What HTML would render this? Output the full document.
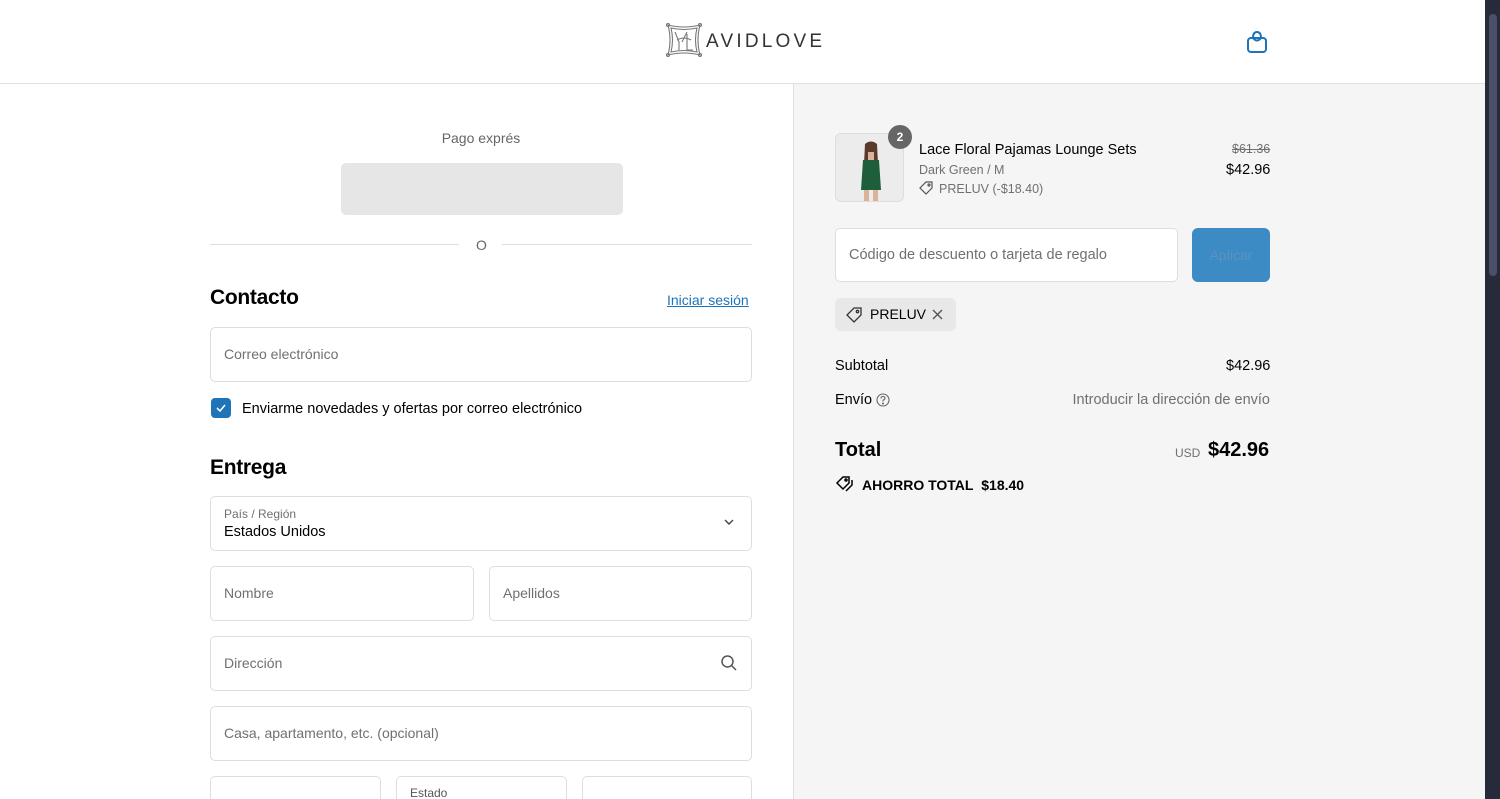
<!DOCTYPE html>
<html style="width:1500px;height:799px;overflow:hidden"><head><meta charset="utf-8"><style>
*{box-sizing:border-box;margin:0;padding:0}
body{width:1500px;height:799px;overflow:hidden;font-family:"Liberation Sans",sans-serif;color:#000;background:#fff;position:relative;font-size:14px}
.a{position:absolute}
.in{position:absolute;border:1px solid #dedede;border-radius:5px;background:#fff;color:#707070;font-size:14px}
.in span{position:absolute;left:13px;top:18px}
</style></head><body>
<div class="a" style="left:0;top:0;width:1485px;height:84px;border-bottom:1px solid #e0e0e0;background:#fff"></div>
<svg class="a" style="left:665px;top:22px" width="38" height="36" viewBox="0 0 38 36" fill="none" stroke="#777" stroke-width="1.1"><path d="M3 3 Q19 7 35 3 Q31 18 35 33 Q19 29 3 33 Q7 18 3 3Z"/><path d="M6 6 Q19 9 32 6 Q29 18 32 30 Q19 27 6 30 Q9 18 6 6Z"/><path d="M10 10 L14 20 L14 28 M22 10 L17 20 M22 12 L22 28 L28 28 M12 18 Q19 14 26 18"/><circle cx="3" cy="3" r="1.5"/><circle cx="35" cy="3" r="1.5"/><circle cx="3" cy="33" r="1.5"/><circle cx="35" cy="33" r="1.5"/></svg>
<div class="a" style="left:706px;top:31px;font-size:19px;letter-spacing:3.2px;color:#333">AVIDLOVE</div>
<svg class="a" style="left:1246px;top:30px" width="22" height="24" viewBox="0 0 22 24" fill="none" stroke="#1f73b7" stroke-width="2"><rect x="2" y="8" width="18" height="14" rx="3"/><path d="M7 8 Q7 2 11 2 Q15 2 15 8 M7 8 Q11 13 15 8"/></svg>
<div class="a" style="left:793px;top:84px;width:692px;height:715px;background:#f5f5f5;border-left:1px solid #e0e0e0"></div>
<div class="a" style="left:1485px;top:0;width:15px;height:799px;background:#262a3a"></div>
<div class="a" style="left:1489px;top:14px;width:8px;height:262px;background:#4c4f6a;border-radius:4px"></div>

<div class="a" style="left:210px;top:130px;width:542px;text-align:center;color:#666;font-size:14px">Pago exprés</div>
<div class="a" style="left:341px;top:163px;width:282px;height:52px;background:#e6e6e6;border-radius:5px"></div>
<div class="a" style="left:210px;top:244px;width:249px;height:1px;background:#dedede"></div>
<div class="a" style="left:502px;top:244px;width:250px;height:1px;background:#dedede"></div>
<div class="a" style="left:476px;top:237px;color:#666;font-size:14px">O</div>
<div class="a" style="left:210px;top:286px;font-size:21px;font-weight:bold;letter-spacing:-0.3px">Contacto</div>
<div class="a" style="left:667px;top:292px;font-size:14px;color:#1f73b7;text-decoration:underline">Iniciar sesión</div>
<div class="in" style="left:210px;top:327px;width:542px;height:55px"><span>Correo electrónico</span></div>
<div class="a" style="left:211px;top:398px;width:20px;height:20px;background:#1f73b7;border-radius:4px"></div>
<svg class="a" style="left:211px;top:398px" width="20" height="20"><path d="M6 10 L9 13 L14 7" stroke="#fff" stroke-width="1.6" fill="none"/></svg>
<div class="a" style="left:242px;top:401px;font-size:14.5px">Enviarme novedades y ofertas por correo electrónico</div>
<div class="a" style="left:210px;top:456px;font-size:21px;font-weight:bold;letter-spacing:-0.3px">Entrega</div>
<div class="in" style="left:210px;top:496px;width:542px;height:55px"><div class="a" style="left:13px;top:10px;font-size:12px;color:#707070">País / Región</div><div class="a" style="left:13px;top:27px;font-size:14.5px;color:#000">Estados Unidos</div></div>
<svg class="a" style="left:723px;top:517px" width="12" height="10"><path d="M2 3 L6 7 L10 3" stroke="#444" stroke-width="1.4" fill="none"/></svg>
<div class="in" style="left:210px;top:566px;width:264px;height:55px"><span>Nombre</span></div>
<div class="in" style="left:489px;top:566px;width:263px;height:55px"><span>Apellidos</span></div>
<div class="in" style="left:210px;top:636px;width:542px;height:55px"><span>Dirección</span></div>
<svg class="a" style="left:720px;top:654px" width="18" height="18" fill="none" stroke="#555" stroke-width="1.5"><circle cx="7.5" cy="7.5" r="5.5"/><path d="M11.5 11.5 L16 16"/></svg>
<div class="in" style="left:210px;top:706px;width:542px;height:55px"><span>Casa, apartamento, etc. (opcional)</span></div>
<div class="in" style="left:210px;top:776px;width:171px;height:23px;border-bottom:none;border-radius:5px 5px 0 0"></div>
<div class="in" style="left:396px;top:776px;width:171px;height:23px;border-bottom:none;border-radius:5px 5px 0 0"><div class="a" style="left:13px;top:9px;font-size:12px;color:#555">Estado</div></div>
<div class="in" style="left:582px;top:776px;width:170px;height:23px;border-bottom:none;border-radius:5px 5px 0 0"></div>

<div class="a" style="left:835px;top:133px;width:69px;height:69px;border:1px solid #ddd;border-radius:6px;background:#ececec;overflow:hidden">
<svg width="69" height="69"><path d="M29 10 Q35 5 41 10 L42 30 L28 30Z" fill="#5a3a2a"/><rect x="32" y="18" width="6" height="10" fill="#d9b49a"/><path d="M27 26 L43 26 L45 56 L25 56Z" fill="#1f5e3a"/><rect x="28" y="56" width="5" height="12" fill="#d9b49a"/><rect x="37" y="56" width="5" height="12" fill="#d9b49a"/></svg></div>
<div class="a" style="left:888px;top:125px;width:24px;height:24px;border-radius:12px;background:#666;color:#fff;font-size:12px;font-weight:bold;text-align:center;line-height:24px">2</div>
<div class="a" style="left:919px;top:142px;font-size:14.5px">Lace Floral Pajamas Lounge Sets</div>
<div class="a" style="left:919px;top:163px;font-size:12.5px;color:#707070">Dark Green / M</div>
<svg class="a" style="left:919px;top:181px" width="14" height="14" fill="none" stroke="#555" stroke-width="1.2"><path d="M7 1 L13 1 L13 7 L7 13 L1 7 Z"/><circle cx="10" cy="4" r="1"/></svg>
<div class="a" style="left:939px;top:182px;font-size:12.5px;color:#707070">PRELUV (-$18.40)</div>
<div class="a" style="left:1232px;top:142px;font-size:12.5px;color:#707070;text-decoration:line-through">$61.36</div>
<div class="a" style="left:1226px;top:162px;font-size:14.5px">$42.96</div>
<div class="in" style="left:835px;top:228px;width:343px;height:54px"><span style="top:18px;font-size:14.5px">Código de descuento o tarjeta de regalo</span></div>
<div class="a" style="left:1192px;top:228px;width:78px;height:54px;background:#3d8bc4;border-radius:6px;color:#5a93bf;font-size:14px;text-align:center;line-height:54px">Aplicar</div>
<div class="a" style="left:835px;top:298px;width:121px;height:33px;background:#e8e8e8;border-radius:6px"></div>
<svg class="a" style="left:845px;top:306px" width="18" height="18" fill="none" stroke="#333" stroke-width="1.3"><path d="M9 2 L16 2 L16 9 L9 16 L2 9 Z"/><circle cx="12.5" cy="5.5" r="1.2"/></svg>
<div class="a" style="left:870px;top:306px;font-size:14px">PRELUV</div>
<svg class="a" style="left:931px;top:308px" width="13" height="13" stroke="#555" stroke-width="1.4"><path d="M2 2 L11 11 M11 2 L2 11"/></svg>
<div class="a" style="left:835px;top:358px;font-size:14.5px">Subtotal</div>
<div class="a" style="left:1226px;top:358px;font-size:14.5px">$42.96</div>
<div class="a" style="left:835px;top:392px;font-size:14.5px">Envío</div>
<svg class="a" style="left:876px;top:393px" width="14" height="14" fill="none" stroke="#666" stroke-width="1.1"><circle cx="7" cy="7" r="6"/><path d="M5 5.5 Q5 3.5 7 3.5 Q9 3.5 9 5.3 Q9 6.5 7 7.3 L7 8.5"/><circle cx="7" cy="10.5" r=".5"/></svg>
<div class="a" style="left:1270px;top:392px;font-size:14.5px;color:#707070;transform:translateX(-100%);white-space:nowrap">Introducir la dirección de envío</div>
<div class="a" style="left:835px;top:439px;font-size:20px;font-weight:bold">Total</div>
<div class="a" style="left:1175px;top:446px;font-size:12px;color:#707070">USD</div>
<div class="a" style="left:1208px;top:439px;font-size:20px;font-weight:bold">$42.96</div>
<svg class="a" style="left:835px;top:475px" width="20" height="18" fill="none" stroke="#000" stroke-width="1.5"><path d="M8 2 L14 2 L14 8 L8 14 L2 8 Z"/><path d="M17 5 L17 10 L11 16"/><circle cx="11" cy="5" r="1"/></svg>
<div class="a" style="left:862px;top:477px;font-size:14px;font-weight:bold">AHORRO TOTAL&nbsp; $18.40</div>
</body></html>
